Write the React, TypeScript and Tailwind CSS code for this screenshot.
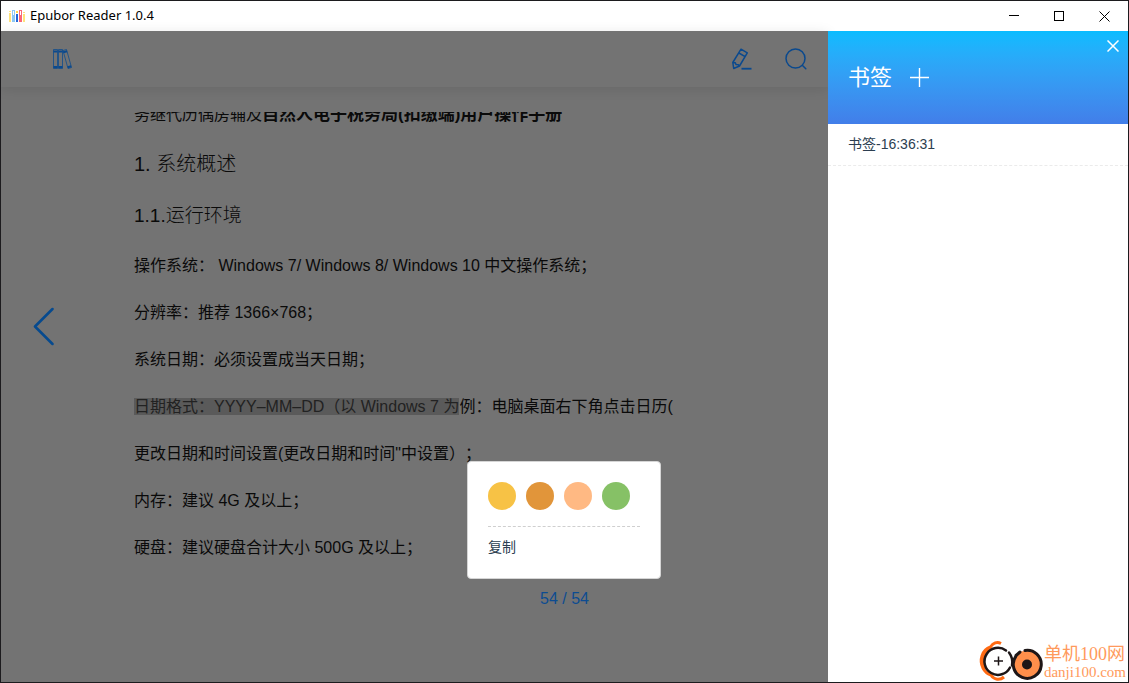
import React from "react";

const lineClass = "h-[47px] whitespace-pre leading-[24px]";

const swatches = [
  { name: "黄色", color: "bg-[#f7c245]" },
  { name: "橙色", color: "bg-[#e1953a]" },
  { name: "桃色", color: "bg-[#ffb983]" },
  { name: "绿色", color: "bg-[#86c166]" },
];

function TitleBar() {
  return (
    <header className="flex h-[30px] shrink-0 items-center bg-white pl-2 text-black">
      <svg width="17" height="14" viewBox="0 0 17 14" shapeRendering="crispEdges" aria-hidden="true">
        <path d="M0 4h2v9H0zM14 5h2v8h-2zM0 2h2v1H0zM14 3h2v1h-2z" fill="#ffe27a" />
        <path d="M3 1h3v12H3z" fill="#8cc8f5" />
        <path d="M7 5h2v8H7z" fill="#2468d8" />
        <path d="M7 2h2v2H7z" fill="#ffd84a" />
        <path d="M10 1h3v12h-3z" fill="#fb6577" />
        <path d="M4 2h1v4H4zM11 2h1v4h-1z" fill="#fff" />
      </svg>
      <h1 className="ml-1 font-['Noto_Sans','Noto_Sans_CJK_SC',sans-serif] text-[13px]">Epubor Reader 1.0.4</h1>
      <div className="ml-auto flex h-full">
        <button aria-label="最小化" className="flex w-[45px] items-center justify-center">
          <svg width="10" height="10" viewBox="0 0 10 10" shapeRendering="crispEdges"><path d="M0 4.500h10" stroke="#000" /></svg>
        </button>
        <button aria-label="最大化" className="flex w-[45px] items-center justify-center">
          <svg width="10" height="10" viewBox="0 0 10 10" shapeRendering="crispEdges"><path d="M.5.5h9v9h-9z" stroke="#000" fill="none" /></svg>
        </button>
        <button aria-label="关闭" className="flex w-[47px] items-center justify-center">
          <svg width="11" height="11" viewBox="0 0 11 11"><path d="M.5.5l10 10M10.500.5l-10 10" stroke="#000" /></svg>
        </button>
      </div>
    </header>
  );
}

function Toolbar() {
  return (
    <div className="flex h-14 shrink-0 items-center pl-[50px] pr-[21px] text-[#0a498e] shadow-[0_2px_12px_rgba(0,0,0,0.1)]">
      <button aria-label="书库">
        <svg width="22" height="22" viewBox="0 0 22 22" fill="none" stroke="currentColor">
          <path d="M2.500 1.500h4v19h-4zM7.500 1.500h4v19h-4zM12 2.500l3.500-1 5 18-3.500 1z" strokeOpacity=".75" />
          <path d="M2.500 3.500h4M7.500 3.500h4M12.300 4.200l3.700-1M2.500 19h4M7.500 19h4M16.700 19.200l3.500-1" strokeWidth="2" />
        </svg>
      </button>
      <button aria-label="笔记" className="ml-auto">
        <svg width="22" height="22" viewBox="0 0 22 22" fill="none" stroke="currentColor" strokeWidth="1.500" strokeLinejoin="round">
          <path d="M10 1.200l6.300 3.700-7.800 13.100-5.800 2.500-.9-6zM7.900 5l6.200 3.600M1.800 14.500l2.500.3.700 1.700 2.300.2 1.200 1.300" />
          <path d="M10.500 20.700h10" strokeWidth="1.800" />
        </svg>
      </button>
      <button aria-label="搜索" className="ml-8">
        <svg width="22" height="22" viewBox="0 0 22 22" fill="none" stroke="currentColor" strokeWidth="1.500" strokeLinecap="round">
          <circle cx="10.500" cy="10.500" r="9.500" /><path d="M17.500 17.500l3.300 3.300" />
        </svg>
      </button>
    </div>
  );
}

function SelectionMenu() {
  return (
    <div className="absolute left-[333px] top-[349px] w-[194px] rounded-[4px] border border-[#d5d5d5] bg-white px-5 pt-5 text-[14px] text-[#2c3e50]">
      <div className="flex gap-[10px] border-b border-dashed border-[#cfcfcf] pb-4">
        {swatches.map((s) => (
          <button key={s.name} aria-label={s.name} className={`size-7 rounded-full ${s.color}`} />
        ))}
      </div>
      <button className="my-[10px] block h-[31px] pb-[10px] leading-[21px]">复制</button>
    </div>
  );
}

function Reader() {
  return (
    <main className="flex min-w-0 flex-1 flex-col bg-[#737373]">
      <Toolbar />
      <div className="mt-[25px] flex">
        <div className="flex w-[133px] shrink-0 items-start pl-[31px] pt-[194px]">
          <button aria-label="上一页">
            <svg width="22" height="40" viewBox="0 0 22 40" fill="none" stroke="#064a8f" strokeWidth="2.500" strokeLinecap="round" strokeLinejoin="round">
              <path d="M20.500 3L3 20.500 20.500 38" />
            </svg>
          </button>
        </div>
        <article className="relative min-w-0 flex-1 text-[16px] text-[#0a0a0a] [text-spacing-trim:space-all]">
          <div className="h-[11px] overflow-hidden">
            <p className="-mt-[9px] whitespace-nowrap leading-[24px]">
              务继代历偶房辅及<b className="text-[17px]">自然人电子税务局(扣缴端)用户操作手册</b>
            </p>
          </div>
          <h2 className="mt-[26px] text-[20px] font-light leading-[30px]">1. 系统概述</h2>
          <h3 className="mb-[22px] mt-[22px] text-[19px] font-light leading-[30px]">1.1.运行环境</h3>
          <p className="h-[47px] whitespace-pre pt-px leading-[24px]">操作系统： Windows 7/ Windows 8/ Windows 10 中文操作系统；</p>
          <p className="h-[47px] whitespace-pre pt-px leading-[24px]">分辨率：推荐 1366×768；</p>
          <p className="h-[47px] whitespace-pre pt-px leading-[24px]">系统日期：必须设置成当天日期；</p>
          <p className="h-[47px] whitespace-pre pt-px leading-[24px]"><mark className="bg-[#5a5a5a] text-[#222]">日期格式：YYYY–MM–DD（以 Windows 7 为</mark>例：电脑桌面右下角点击日历(</p>
          <p className="h-[47px] whitespace-pre pt-px leading-[24px]">更改日期和时间设置(更改日期和时间"中设置）；</p>
          <p className="h-[47px] whitespace-pre pt-px leading-[24px]">内存：建议 4G 及以上；</p>
          <p className="h-[47px] whitespace-pre pt-px leading-[24px]">硬盘：建议硬盘合计大小 500G 及以上；</p>
          <SelectionMenu />
        </article>
      </div>
      <p className="-mr-[300px] mt-[5px] text-center text-[16px] leading-[24px] text-[#0d4c91]">54 / 54</p>
    </main>
  );
}

function Watermark() {
  return (
    <div className="mt-auto flex items-end justify-end pr-0.5 text-[#ff9a5c]">
      <svg width="66" height="42" viewBox="0 0 66 42" fill="none">
        <path d="M23 3.500C19 1.500 15 3 12.500 7 4 10 1 20 5 28c2 4 5 6 8 7 3 5 9 5.500 13 2" stroke="#ff6a13" strokeWidth="3" strokeLinejoin="round" />
        <path d="M12 7C3 12 1 22 6 29L9 28C5 21 7 14 13 9z" fill="#ff6a13" />
        <path d="M28 10.500a13.500 13.500 0 1 0 4 17" stroke="#1d1617" strokeWidth="2.500" strokeLinecap="round" />
        <path d="M31 12.500c3 4 4 8 3 13" stroke="#1d1617" strokeWidth="2.500" strokeLinecap="round" />
        <path d="M20.500 16.500v9M16 21h9" stroke="#1d1617" strokeWidth="1.500" />
        <circle cx="49" cy="24.500" r="14" fill="#ff8f4b" />
        <path d="M47 10.500a14 14 0 1 1-9 5.500M38 15.500l4-3.500" stroke="#1d1617" strokeWidth="3" strokeLinecap="round" />
        <circle cx="49" cy="24.500" r="5" fill="#1d1617" />
      </svg>
      <div className="pb-px font-['Liberation_Serif','Noto_Sans_CJK_SC',serif]">
        <div className="text-[18px] leading-[18px]">单机100网</div>
        <div className="text-[15px] leading-[18px]">danji100.com</div>
      </div>
    </div>
  );
}

function BookmarkPanel() {
  return (
    <aside className="relative flex w-[300px] shrink-0 flex-col bg-white text-[14px] text-[#2c3e50]">
      <div className="relative flex h-[93px] items-center gap-[18px] bg-linear-to-b from-[#08bcff] to-[#427ee9] px-5 text-white">
        <h2 className="text-[22px] leading-[30px]">书签</h2>
        <button aria-label="添加书签">
          <svg width="19" height="19" viewBox="0 0 19 19"><path d="M9.500 0v19M0 9.500h19" stroke="#fff" strokeWidth="1.400" /></svg>
        </button>
        <button aria-label="关闭书签" className="absolute right-[9px] top-[9px]">
          <svg width="12" height="12" viewBox="0 0 12 12"><path d="M.5.5l11 11M11.500.5l-11 11" stroke="#fff" strokeWidth="1.500" /></svg>
        </button>
      </div>
      <ul>
        <li className="border-b border-dashed border-[#ebebeb] px-5 py-[10px] leading-[21px]">
          <a href="#bookmark">书签-16:36:31</a>
        </li>
      </ul>
      <Watermark />
    </aside>
  );
}

export default function App() {
  return (
    <div className="flex min-h-screen flex-col border border-[#1c1b1e] font-['Liberation_Sans','Noto_Sans_CJK_SC',sans-serif]">
      <TitleBar />
      <div className="flex flex-1">
        <Reader />
        <BookmarkPanel />
      </div>
    </div>
  );
}
